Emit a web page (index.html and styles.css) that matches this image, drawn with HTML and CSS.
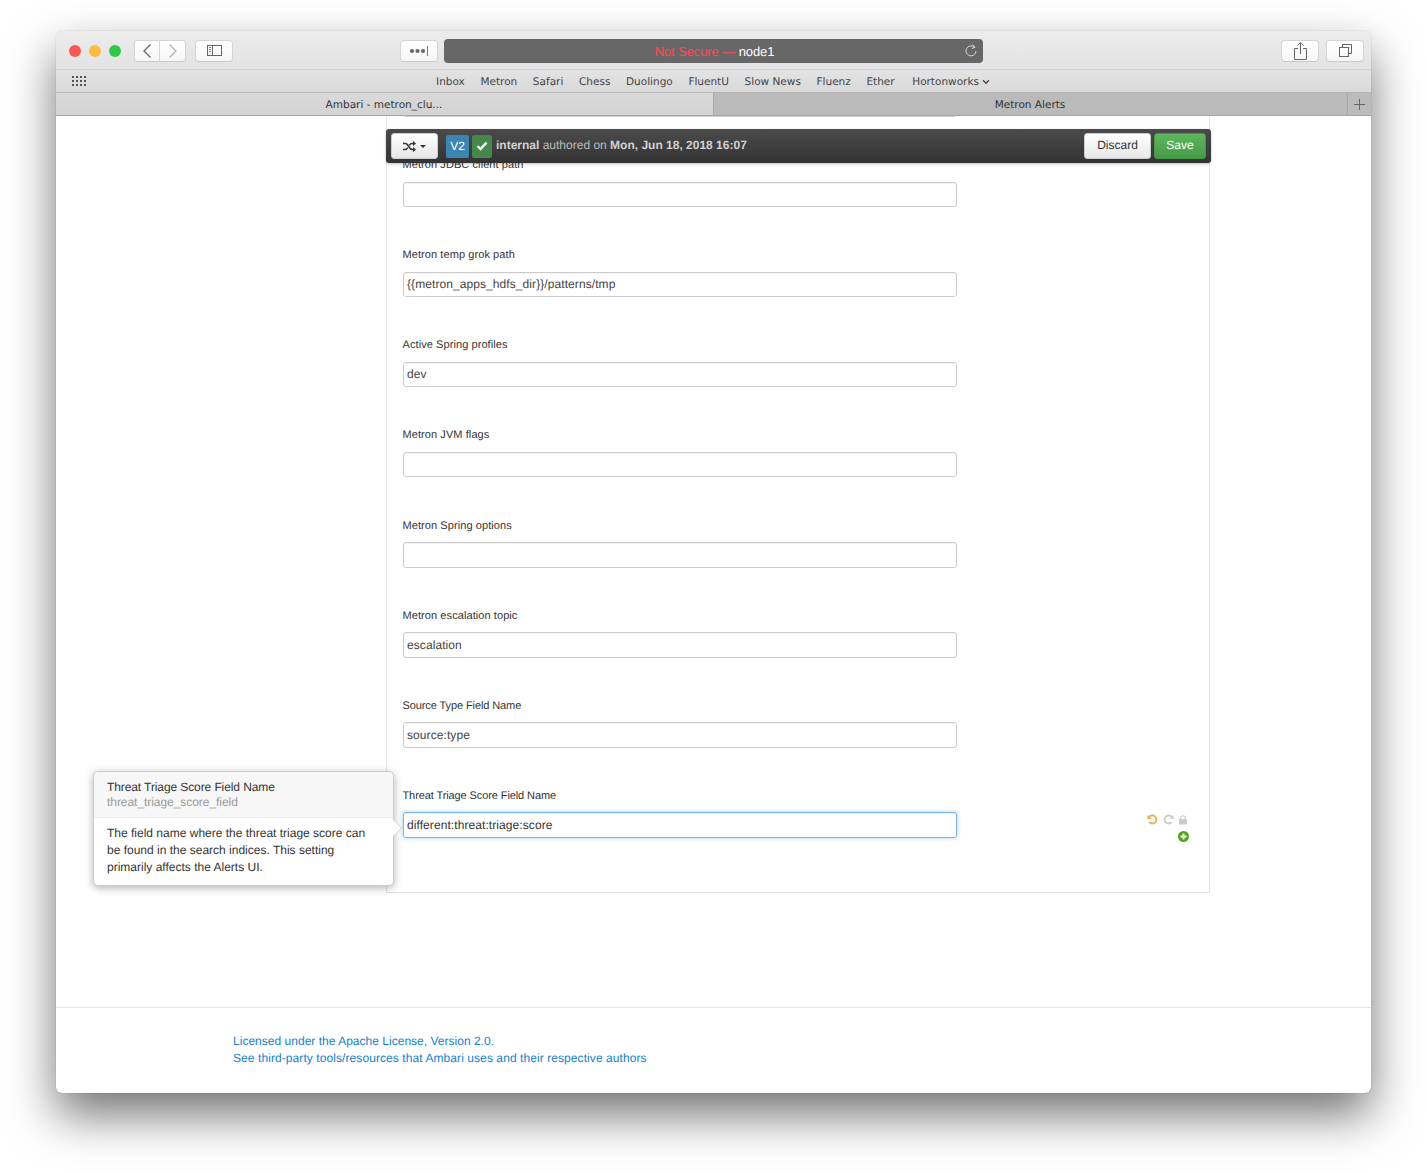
FILE: index.html
```html
<!DOCTYPE html>
<html lang="en">
<head>
<meta charset="utf-8">
<title>Ambari - metron_cluster</title>
<link rel="stylesheet" href="styles.css">
</head>
<body>
<div class="stage">
  <div class="window">
    <header class="toolbar">
      <div class="lights"><span class="light red"></span><span class="light yellow"></span><span class="light green"></span></div>
      <div class="nav">
        <button class="tool nav-back"><svg width="10" height="16" viewBox="0 0 10 16"><path d="M8.5 1.5 2 8l6.500 6.500" fill="none" stroke="#666" stroke-width="1.300"/></svg></button>
        <button class="tool nav-fwd"><svg width="10" height="16" viewBox="0 0 10 16"><path d="M1.500 1.500 8 8l-6.500 6.500" fill="none" stroke="#b4b4b4" stroke-width="1.300"/></svg></button>
      </div>
      <button class="tool sidebar-btn"><svg width="15" height="11" viewBox="0 0 15 11"><rect x=".5" y=".5" width="14" height="10" fill="none" stroke="#666"/><path d="M5.500 .5v10" stroke="#666"/><path d="M2 2.500h2M2 4.500h2M2 6.500h2" stroke="#888"/></svg></button>
      <button class="tool dots-btn"><svg width="20" height="10" viewBox="0 0 20 10"><circle cx="3" cy="5" r="2.100" fill="#666"/><circle cx="8.500" cy="5" r="2.100" fill="#666"/><circle cx="14" cy="5" r="2.100" fill="#666"/><path d="M18.500 0v10" stroke="#777"/></svg></button>
      <div class="address"><span class="not-secure">Not Secure —</span>&nbsp;<span class="host">node1</span>
        <svg class="reload" width="12" height="13" viewBox="0 0 12 13"><path d="M9.500 3.300A5 5 0 1 0 11 7" fill="none" stroke="#d8d8d8"/><path d="M7.500 .5 10 3.300 6.800 4.500" fill="none" stroke="#d8d8d8"/></svg>
      </div>
      <div class="tool-right">
        <button class="tool"><svg width="13" height="18" viewBox="0 0 13 18"><path d="M4 6.500H.5v11h12v-11H9M6.500 12V.8M3.500 3.500l3-3 3 3" fill="none" stroke="#666"/></svg></button>
        <button class="tool"><svg width="13" height="13" viewBox="0 0 13 13"><path d="M3.500 3V.5h9v9H10" fill="none" stroke="#666"/><rect x=".5" y="3.500" width="9" height="9" fill="none" stroke="#666"/></svg></button>
      </div>
    </header>
    <nav class="bookmarks">
      <svg class="grid-icon" width="15" height="11" viewBox="0 0 15 11"><g fill="#555"><rect width="2" height="2"/><rect x="4" width="2" height="2"/><rect x="8" width="2" height="2"/><rect x="12" width="2" height="2"/><rect y="4" width="2" height="2"/><rect x="4" y="4" width="2" height="2"/><rect x="8" y="4" width="2" height="2"/><rect x="12" y="4" width="2" height="2"/><rect y="8" width="2" height="2"/><rect x="4" y="8" width="2" height="2"/><rect x="8" y="8" width="2" height="2"/><rect x="12" y="8" width="2" height="2"/></g></svg>
      <span class="mark">Inbox</span><span class="mark">Metron</span><span class="mark">Safari</span><span class="mark">Chess</span><span class="mark">Duolingo</span><span class="mark">FluentU</span><span class="mark">Slow News</span><span class="mark">Fluenz</span><span class="mark">Ether</span>
      <span class="mark mark-folder">Hortonworks <svg width="8" height="6" viewBox="0 0 8 6"><path d="M1 1.300 4 4.300l3-3" fill="none" stroke="#444" stroke-width="1.300"/></svg></span>
    </nav>
    <div class="tabs">
      <div class="tab tab-active">Ambari - metron_clu...</div>
      <div class="tab tab-back">Metron Alerts</div>
      <div class="tab-add"><svg width="11" height="11" viewBox="0 0 11 11"><path d="M5.500 0v11M0 5.500h11" stroke="#666"/></svg></div>
    </div>
    <div class="page">
      <main class="main">
        <div class="version-bar">
          <button class="switch-btn"><svg width="13" height="11" viewBox="0 0 13 11"><path d="M0 2.500h2.500c3 0 3.500 6 6.500 6h1.500M0 8.500h2.500c1 0 1.600-.8 2.200-1.800M6.300 4.300C7 3.300 7.800 2.500 9 2.500h1.500" fill="none" stroke="#333" stroke-width="1.500"/><path d="M10 0l3 2.500L10 5zM10 6l3 2.500L10 11z" fill="#333"/></svg><i class="caret"></i></button>
          <span class="badge badge-v">V2</span>
          <span class="badge badge-ok"><svg width="12" height="10" viewBox="0 0 12 10"><path d="M1.500 5 4.500 8l6-6.300" fill="none" stroke="#fff" stroke-width="2.400"/></svg></span>
          <span class="authored"><b>internal</b> authored on <b>Mon, Jun 18, 2018 16:07</b></span>
          <button class="btn btn-discard">Discard</button>
          <button class="btn btn-save">Save</button>
        </div>
        <section class="panel">
          <input class="input input-cut" type="text" value="">
          <div class="field"><label class="label">Metron JDBC client path</label><input class="input" type="text" value=""></div>
          <div class="field"><label class="label">Metron temp grok path</label><input class="input" type="text" value="{{metron_apps_hdfs_dir}}/patterns/tmp"></div>
          <div class="field"><label class="label">Active Spring profiles</label><input class="input" type="text" value="dev"></div>
          <div class="field"><label class="label">Metron JVM flags</label><input class="input" type="text" value=""></div>
          <div class="field"><label class="label label-low">Metron Spring options</label><input class="input input-tall" type="text" value=""></div>
          <div class="field"><label class="label label-low">Metron escalation topic</label><input class="input input-tall" type="text" value="escalation"></div>
          <div class="field"><label class="label label-low label-tight">Source Type Field Name</label><input class="input input-tall" type="text" value="source:type"></div>
          <div class="field"><label class="label label-low label-tight">Threat Triage Score Field Name</label>
            <div class="input-row">
              <input class="input input-tall input-focus" type="text" value="different:threat:triage:score">
              <div class="actions">
                <svg width="11" height="11" viewBox="0 0 12 12"><path d="M2.300 3.300A4.400 4.400 0 1 1 2.500 8.800" fill="none" stroke="#f0ad4e" stroke-width="2"/><path d="M.5 .8v4.600h4.600z" fill="#f0ad4e"/></svg>
                <svg width="11" height="11" viewBox="0 0 12 12"><path d="M9.700 3.300A4.400 4.400 0 1 0 9.500 8.800" fill="none" stroke="#ccc" stroke-width="2"/><path d="M11.500 .8v4.600H6.900z" fill="#ccc"/></svg>
                <svg class="lock-icon" width="8" height="10" viewBox="0 0 9 11"><path d="M2 5V3.200a2.500 2.500 0 0 1 5 0V5" fill="none" stroke="#ccc" stroke-width="1.300"/><rect y="4.500" width="9" height="6" rx=".8" fill="#ccc"/></svg>
                <svg class="add-icon" width="11" height="11" viewBox="0 0 11 11"><circle cx="5.500" cy="5.500" r="5.500" fill="#4fa61e"/><path d="M5.500 2.500v6M2.500 5.500h6" stroke="#fff" stroke-width="1.800"/></svg>
              </div>
            </div>
          </div>
        </section>
        <aside class="popover">
          <div class="popover-head">
            <div class="popover-title">Threat Triage Score Field Name</div>
            <div class="popover-key">threat_triage_score_field</div>
          </div>
          <p class="popover-body">The field name where the threat triage score can be found in the search indices. This setting primarily affects the Alerts UI.</p>
          <i class="popover-arrow"></i>
        </aside>
      </main>
      <footer class="footer">
        <a class="footer-link footer-license">Licensed under the Apache License, Version 2.0.</a>
        <a class="footer-link">See third-party tools/resources that Ambari uses and their respective authors</a>
      </footer>
    </div>
  </div>
</div>
</body>
</html>
```
FILE: styles.css
```css
* { box-sizing: border-box; }
html, body { margin: 0; height: 100%; background: #fff; overflow: hidden; }
body { font-family: "Liberation Sans", Arial, sans-serif; color: #333; text-rendering: geometricPrecision; }
button { font-family: inherit; padding: 0; cursor: default; text-rendering: inherit; }

.stage { height: 1173px; padding: 31px 0 80px 56px; position: relative; }
.window {
  width: 1315px; height: 1062px; display: flex; flex-direction: column;
  border-radius: 6px; overflow: hidden; background: #fff;
  box-shadow: 0 22px 48px rgba(0,0,0,.55), 0 0 1px rgba(0,0,0,.4);
  position: relative;
}

.toolbar {
  height: 39px; flex: none; display: flex; align-items: center; padding: 1px 7px 0 13px;
  background: linear-gradient(#ececec, #e3e3e5); border-bottom: 1px solid #d1d1d1;
}
.lights { display: flex; gap: 8px; }
.light { width: 12px; height: 12px; border-radius: 50%; }
.red { background: #fc5753; }
.yellow { background: #fdbc40; }
.green { background: #33c748; }
.tool {
  width: 38px; height: 22px; display: flex; align-items: center; justify-content: center;
  background: linear-gradient(#fff, #f6f6f6); border: 1px solid #d4d4d4; border-bottom-color: #c8c8c8; border-radius: 4px;
}
.nav { display: flex; margin-left: 13px; }
.nav-back, .nav-fwd { width: 26px; }
.nav-back { border-radius: 4px 0 0 4px; }
.nav-fwd { border-radius: 0 4px 4px 0; border-left: 0; }
.sidebar-btn { margin-left: 9px; }
.dots-btn { margin-left: 167px; }
.address {
  position: relative; width: 539px; height: 24px; margin-left: 6px; padding: 2px 0 0 2px; border-radius: 4px;
  background: #676767; display: flex; align-items: center; justify-content: center;
  font-size: 13px; letter-spacing: -.1px;
}
.not-secure { color: #fb4a55; }
.host { color: #fff; }
.reload { position: absolute; right: 6px; top: 5px; }
.tool-right { margin-left: auto; display: flex; gap: 7px; }

.bookmarks {
  height: 23px; flex: none; display: flex; align-items: center; padding: 1px 0 0 16px; gap: 15.650px;
  background: linear-gradient(#e3e3e5, #d9d9d9); border-bottom: 1px solid #b5b5b5;
  font-family: "DejaVu Sans", sans-serif; font-size: 10.500px; color: #444;
}
.grid-icon { margin-right: 333.400px; }
.mark-folder { margin-left: 2px; }

.tabs {
  height: 23px; flex: none; display: flex; background: #bbb; border-bottom: 1px solid #a6a6a6;
  font-family: "DejaVu Sans", sans-serif; font-size: 10.500px; color: #333;
}
.tab { display: flex; align-items: center; justify-content: center; padding-top: 1px; }
.tab-active { width: 658px; padding-right: 1px; background: linear-gradient(#d9d9d9, #d3d3d3); border-right: 1px solid #a8a8a8; }
.tab-back { width: 633px; padding-right: 1px; background: #bababa; }
.tab-add { flex: 1; display: flex; align-items: center; justify-content: center; border-left: 1px solid #a8a8a8; }

.page { flex: 1; display: flex; flex-direction: column; min-height: 0; }
.main { flex: 1; position: relative; min-height: 0; padding-left: 330px; border-bottom: 1px solid #e5e5e5; }

.panel {
  width: 824px; height: 777px; overflow: hidden; padding: 0 20px 0 16px;
  border: 1px solid #e3e3e3; border-width: 0 1px 1px 1px;
}
.field { height: 90px; }
.label { display: block; height: 28px; padding-top: 3px; line-height: 16px; font-size: 11px; color: #333; letter-spacing: .08px; margin-left: -.5px; }
.label-low { padding-top: 4px; }
.label-tight { letter-spacing: -.1px; }
.input {
  display: block; width: 554px; height: 25px; padding: 0 3px 1px; margin: 0;
  border: 1px solid #ccc; border-radius: 3px; outline: 0; background: #fff;
  font: 12px/22px "Liberation Sans", Arial, sans-serif; color: #444; letter-spacing: .08px; text-rendering: geometricPrecision;
  box-shadow: inset 0 1px 1px rgba(0,0,0,.05);
}
.input-tall { height: 26px; }
.input-cut { margin-top: -24px; margin-bottom: 37px; }
.input-focus { border-color: #7ab8ea; box-shadow: inset 0 1px 1px rgba(0,0,0,.075), 0 0 4px rgba(102,175,233,.6); color: #333; }
.input-row { display: flex; align-items: flex-start; }
.actions {
  margin-left: auto; margin-top: 2px; width: 42px; display: flex; flex-wrap: wrap; justify-content: flex-end; align-items: center; column-gap: 5px; row-gap: 6px;
}
.lock-icon { margin-right: 2px; }

.version-bar {
  position: absolute; left: 330px; top: 13px; width: 825px; height: 34px; z-index: 2;
  display: flex; align-items: center; padding: 0 5px;
  background: linear-gradient(#4b4b4b, #333); border-radius: 3px;
  box-shadow: 0 1px 3px rgba(0,0,0,.25);
}
.switch-btn {
  width: 47px; height: 26px; display: flex; align-items: center; justify-content: center; gap: 4px;
  background: linear-gradient(#fff, #e6e6e6); border: 1px solid #ccc; border-radius: 3px;
}
.caret { border: 3px solid transparent; border-top-color: #333; border-bottom: 0; width: 0; height: 0; }
.badge {
  height: 23px; display: flex; align-items: center; justify-content: center; border-radius: 2px;
  color: #fff; font-size: 12px;
}
.badge-v { width: 23px; margin-left: 8px; background: #3a86b0; }
.badge-ok { width: 20px; margin-left: 3px; background: #46884a; }
.authored { margin-left: 4px; padding-bottom: 2px; font-size: 12px; color: #bdbdbd; }
.authored b { color: #d2d2d2; }
.btn {
  height: 26px; padding-bottom: 2px; border-radius: 3px; font-size: 12px;
  display: flex; align-items: center; justify-content: center;
}
.btn-discard { width: 67px; margin-left: auto; color: #333; background: linear-gradient(#fff, #e8e8e8); border: 1px solid #ccc; }
.btn-save { width: 52px; margin-left: 3px; color: #fff; background: linear-gradient(#5cb85c, #479a47); border: 1px solid #459945; }

.popover {
  position: absolute; left: 37px; top: 655px; width: 301px; height: 115px; z-index: 3;
  background: #fff; border: 1px solid #ccc; border-radius: 5px;
  box-shadow: 0 2px 8px rgba(0,0,0,.3);
  font-size: 12px; color: #333;
}
.popover-head {
  height: 46px; padding: 8px 13px 0; background: #f7f7f7; border-bottom: 1px solid #ebebeb;
  border-radius: 5px 5px 0 0; line-height: 15px;
}
.popover-title { letter-spacing: -.1px; }
.popover-key { color: #999; letter-spacing: -.05px; }
.popover-body { margin: 0; padding: 7px 13px 0; line-height: 17px; }
.popover-arrow {
  position: absolute; left: 294px; top: 50px; width: 12px; height: 12px; transform: rotate(45deg);
  background: #fff; border: 1px solid #d8d8d8; border-width: 1px 1px 0 0;
}

.footer {
  height: 85px; flex: none; display: flex; flex-direction: column; padding: 25px 0 0 177px;
  font-size: 12px; line-height: 17px; letter-spacing: .08px;
}
.footer-link { color: #1481cf; }
.footer-license { letter-spacing: .02px; }
```
